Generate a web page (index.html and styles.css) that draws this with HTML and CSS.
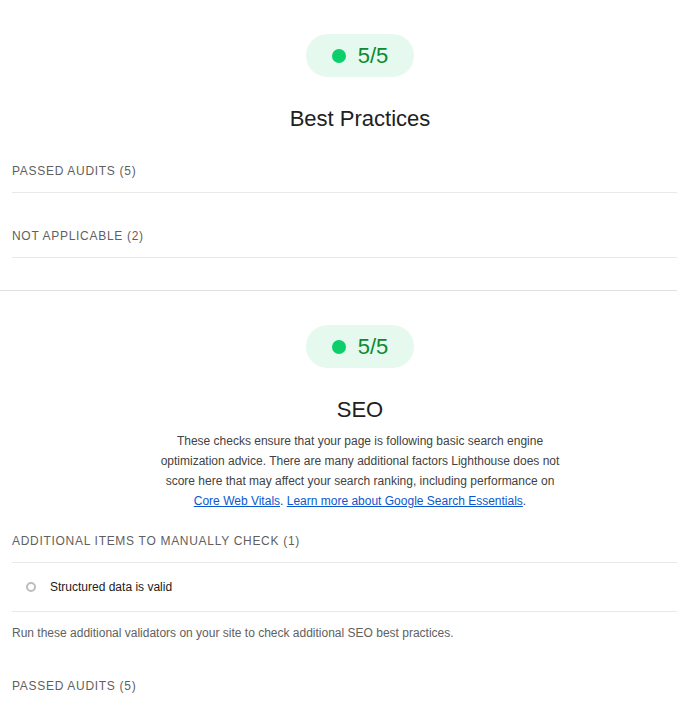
FILE: index.html
```html
<!DOCTYPE html>
<html lang="en">
<head>
<meta charset="utf-8">
<title>Lighthouse</title>
<link rel="stylesheet" href="styles.css">
</head>
<body>
<main class="report">
<section class="category">
  <div class="gauge-wrap">
    <div class="pill"><span class="dot"></span><span class="score">5/5</span></div>
  </div>
  <h2 class="cat-title">Best Practices</h2>
  <div class="groups">
    <div class="group-header first">Passed audits <span class="count">(5)</span></div>
    <div class="group-header spaced">Not applicable <span class="count">(2)</span></div>
  </div>
</section>
<section class="category second">
  <div class="gauge-wrap">
    <div class="pill"><span class="dot"></span><span class="score">5/5</span></div>
  </div>
  <h2 class="cat-title">SEO</h2>
  <p class="cat-desc">These checks ensure that your page is following basic search engine optimization advice. There are many additional factors Lighthouse does not score here that may affect your search ranking, including performance on <a href="#">Core Web Vitals</a>. <a href="#">Learn more about Google Search Essentials</a>.</p>
  <div class="groups">
    <div class="group-header manual">Additional items to manually check <span class="count">(1)</span></div>
    <div class="audit"><span class="ring"></span><span class="audit-title">Structured data is valid</span></div>
    <p class="group-desc">Run these additional validators on your site to check additional SEO best practices.</p>
    <div class="group-header passed">Passed audits <span class="count">(5)</span></div>
  </div>
</section>
</main>
</body>
</html>
```
FILE: styles.css
```css
html, body {
  margin: 0;
  padding: 0;
  background: #ffffff;
  overflow: hidden;
}
body {
  font-family: "Liberation Sans", Arial, sans-serif;
  color: #212121;
}
.report {
  width: 720px;
}
.category {
  padding-top: 34px;
  padding-bottom: 32px;
}
.category.second {
  border-top: 1px solid #e0e0e0;
}
.gauge-wrap {
  display: flex;
  justify-content: center;
}
.pill {
  display: inline-flex;
  align-items: center;
  gap: 12px;
  height: 43px;
  padding: 0 26px 0 26px;
  border-radius: 22px;
  background: #e6f9ee;
}
.dot {
  width: 14px;
  height: 14px;
  border-radius: 50%;
  background: #0cce6b;
}
.score {
  font-size: 22px;
  line-height: 26px;
  color: #0b8a32;
}
.cat-title {
  margin: 29px 0 0 0;
  font-size: 22px;
  font-weight: normal;
  line-height: 26px;
  text-align: center;
  color: #212121;
}
.cat-desc {
  width: 400px;
  margin: 8px auto 0 auto;
  font-size: 12px;
  line-height: 20px;
  text-align: center;
  color: #424242;
}
.cat-desc a {
  color: #0b57d0;
  text-decoration: underline;
}
.groups {
  padding-left: 12px;
}
.group-header {
  box-sizing: border-box;
  height: 45px;
  padding-top: 2px;
  display: flex;
  align-items: center;
  border-bottom: 1px solid #e8e8e8;
  font-size: 12px;
  letter-spacing: 0.7px;
  text-transform: uppercase;
  color: #5f5f5f;
}
.group-header .count {
  margin-left: 4px;
}
.group-header.first {
  margin-top: 16px;
}
.group-header.spaced {
  margin-top: 20px;
}
.group-header.manual {
  margin-top: 7px;
}
.group-header.passed {
  margin-top: 20px;
}
.audit {
  height: 48px;
  display: flex;
  align-items: center;
  border-bottom: 1px solid #e8e8e8;
  padding-left: 14px;
  font-size: 12px;
  color: #212121;
}
.ring {
  width: 6px;
  height: 6px;
  border: 2px solid #bdbdbd;
  border-radius: 50%;
  margin-right: 14px;
}
.group-desc {
  margin: 11px 0 0 0;
  font-size: 12px;
  line-height: 20px;
  color: #616161;
}
```
